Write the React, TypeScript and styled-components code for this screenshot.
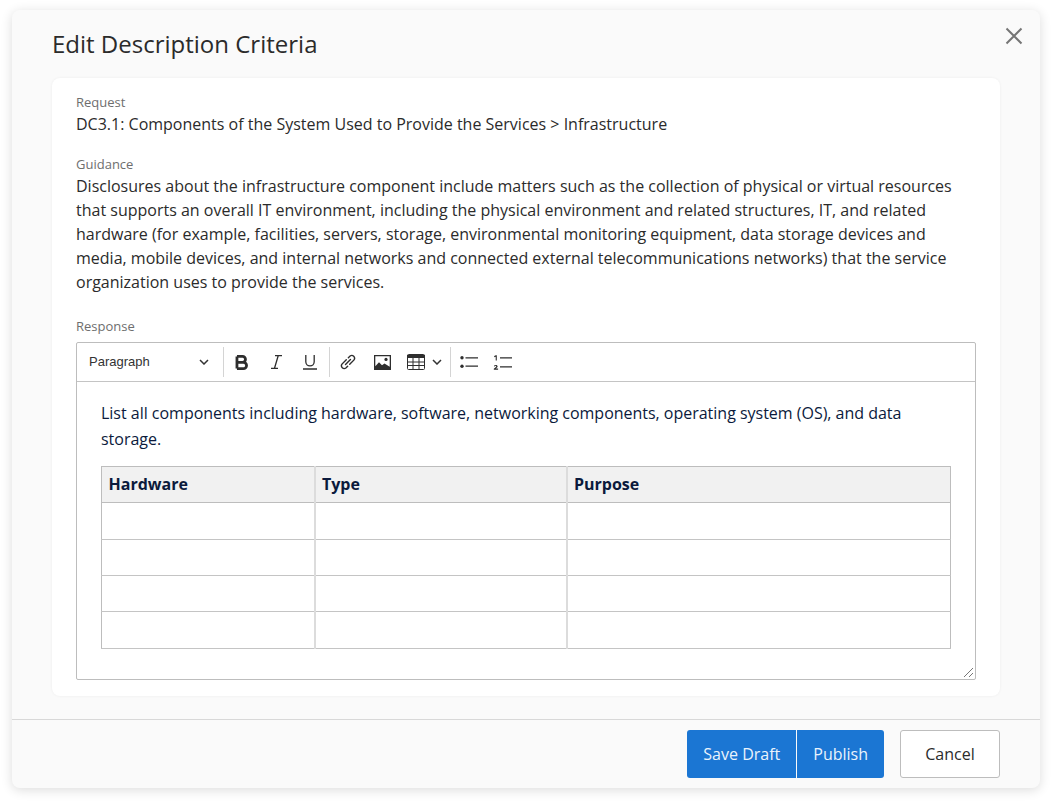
import React from "react";
import styled, { createGlobalStyle } from "styled-components";

const Global = createGlobalStyle`
  html, body { margin: 0; padding: 0; background: #fff; }
  * { box-sizing: border-box; }
  #root { font-family: "Open Sans", sans-serif; }
`;
const Page = styled.div`
  width: 1052px; height: 802px; padding: 10px 12px 14px; overflow: hidden;
`;
const Dialog = styled.div`
  position: relative; width: 1028px; height: 778px; background: #fafafa; border-radius: 8px;
  box-shadow: 0 2px 12px rgba(0,0,0,.14);
  display: flex; flex-direction: column;
`;
const Header = styled.div`
  height: 68px; padding: 17px 40px 0; flex: none;
`;
const Title = styled.h2`
  margin: 0; font-size: 24px; line-height: 33px; font-weight: 400; color: #2b2b2b;
`;
const Close = styled.button`
  position: absolute; top: 16px; right: 16px; width: 20px; height: 20px; padding: 0;
  border: 0; background: none; color: #757575; display: flex;
`;
const Card = styled.div`
  margin: 0 40px; padding: 14px 24px 16px; height: 618px; flex: none; background: #fff; border-radius: 8px;
  box-shadow: 0 0 3px rgba(0,0,0,.06);
`;
const Field = styled.div<{ $mb?: number }>`
  margin-bottom: ${p => p.$mb ?? 0}px;
`;
const Label = styled.div`
  font-size: 13px; line-height: 20px; color: #6e6e6e;
`;
const Value = styled.div`
  font-size: 16px; line-height: 24px; color: #2b2b2b;
`;
const Editor = styled.div`
  height: 338px; margin-top: 6px; border: 1px solid #bdbdbd; border-radius: 2px; background: #fff; position: relative;
  display: flex; flex-direction: column;
`;
const Toolbar = styled.div`
  height: 39px; flex: none; border-bottom: 1px solid #c4c4c4; display: flex; align-items: center; padding-left: 12px;
`;
const Select = styled.div`
  width: 134px; display: flex; align-items: center; justify-content: space-between; padding-right: 14px;
  font-family: "Liberation Sans", sans-serif; font-size: 13px; line-height: 14px; padding-bottom: 1px; color: #333;
`;
const Sep = styled.span<{ $ml?: number; $mr?: number }>`
  width: 1px; height: 30px; background: #d4d4d4; flex: none;
  margin: 0 ${p => p.$mr ?? 0}px 0 ${p => p.$ml ?? 0}px;
`;
const Tool = styled.span<{ $w?: number }>`
  width: ${p => p.$w ?? 34}px; height: 24px; display: flex; align-items: center; justify-content: center; flex: none; color: #2e2e2e;
`;
const ToolGap = styled.span`
  width: 7px; flex: none;
`;
const Content = styled.div`
  padding: 19px 24px 0; color: #0b1a3c; font-size: 16px; line-height: 25.6px; flex: 1;
`;
const Para = styled.p`
  margin: 0 0 14px; letter-spacing: -0.015px;
`;
const Table = styled.table`
  width: 850px; border-collapse: collapse; table-layout: fixed; border: 1px solid #bdbdbd;
`;
const Th = styled.th<{ $w?: number }>`
  ${p => (p.$w ? `width: ${p.$w}px;` : "")}
  height: 36.3px; padding: 0 6.5px 1px; background: #f1f1f1; text-align: left; font-size: 16px; font-weight: 700; color: #0b1a3c;
  border: 1px solid #bdbdbd; border-left: 2px solid #dcdcdc; border-right: 2px solid #dcdcdc;
  &:first-child { border-left: 1px solid #bdbdbd; }
  &:last-child { border-right: 1px solid #bdbdbd; }
`;
const Td = styled.td`
  height: 36.3px; border: 1px solid #c4c4c4; border-left: 2px solid #dcdcdc; border-right: 2px solid #dcdcdc;
  &:first-child { border-left: 1px solid #bdbdbd; }
  &:last-child { border-right: 1px solid #bdbdbd; }
`;
const Grip = styled.svg`
  position: absolute; right: 1px; bottom: 1px;
`;
const Footer = styled.div`
  flex: none; margin-top: 23px; border-top: 1px solid #d8d8d8; padding: 10px 40px 0; display: flex; justify-content: flex-end;
`;
const Primary = styled.button<{ $side: "l" | "r" }>`
  height: 48px; padding: 0 16px; background: #1b76d3; color: #eaf3fc; border: 0; font: 400 16px "Open Sans", sans-serif;
  border-radius: ${p => (p.$side === "l" ? "3px 0 0 3px" : "0 3px 3px 0")};
  ${p => (p.$side === "r" ? "margin-left: 1px;" : "")}
`;
const Secondary = styled.button`
  height: 48px; width: 100px; margin-left: 16px; background: #fff; color: #2b2b2b; border: 1px solid #bdbdbd; border-radius: 3px;
  font: 400 16px "Open Sans", sans-serif;
`;

const Chevron = () => (
  <svg width="10" height="6" viewBox="0 0 10 6" fill="none" stroke="#333" strokeWidth="1.5"><path d="M1 1l4 4 4-4" /></svg>
);

export default function App() {
  return (
    <Page>
      <Global />
      <Dialog>
        <Header><Title>Edit Description Criteria</Title></Header>
        <Close aria-label="Close">
          <svg width="20" height="20" viewBox="0 0 20 20" stroke="currentColor" strokeWidth="2" fill="none"><path d="M2.5 2.5l15 15M17.5 2.5l-15 15" /></svg>
        </Close>
        <Card>
          <Field $mb={18}>
            <Label>Request</Label>
            <Value>DC3.1: Components of the System Used to Provide the Services &gt; Infrastructure</Value>
          </Field>
          <Field $mb={22}>
            <Label>Guidance</Label>
            <Value>
              Disclosures about the infrastructure component include matters such as the collection of physical or virtual resources<br />
              that supports an overall IT environment, including the physical environment and related structures, IT, and related<br />
              hardware (for example, facilities, servers, storage, environmental monitoring equipment, data storage devices and<br />
              media, mobile devices, and internal networks and connected external telecommunications networks) that the service<br />
              organization uses to provide the services.
            </Value>
          </Field>
          <Label>Response</Label>
          <Editor>
            <Toolbar>
              <Select>Paragraph<Chevron /></Select>
              <Sep $mr={1} />
              <Tool>
                <svg width="14" height="15" viewBox="0 0 13 14" fill="none" stroke="#2e2e2e" strokeWidth="2.6"><path d="M1.800 1.300V12.700M1.800 1.300H7a2.700 2.700 0 0 1 0 5.500H1.800M1.800 6.800H7.800a2.950 2.950 0 0 1 0 5.900H1.800" /></svg>
              </Tool>
              <Tool>
                <svg width="11" height="14" viewBox="0 0 11 14" fill="none" stroke="#2e2e2e" strokeWidth="1.300"><path d="M4 .7h7M0 13.300h7M7.200 .7L3.500 13.300" /></svg>
              </Tool>
              <Tool>
                <svg width="14" height="15" viewBox="0 0 14 15" fill="none" stroke="#2e2e2e" strokeWidth="1.300"><path d="M2.800 0v6.700a4.200 4.200 0 0 0 8.400 0V0M0 14h14" /></svg>
              </Tool>
              <Sep $ml={2} $mr={1} />
              <Tool>
                <svg width="16" height="16" viewBox="1 1 13 13" fill="none" stroke="#2e2e2e" strokeWidth="1.150" strokeLinecap="round"><path d="M9.500 5.500L5.500 9.500M8.900 9.300L12.400 5.800A2.300 2.300 0 0 0 9.200 2.600L7.800 4M6.100 5.700L2.600 9.200A2.300 2.300 0 0 0 5.800 12.400L7.200 11" /></svg>
              </Tool>
              <Tool>
                <svg width="17" height="15" viewBox="0 0 17 15"><path fillRule="evenodd" fill="#2e2e2e" d="M0 0h17v15H0zM1.300 1.300v10l3.700-4 3 3 2.500-1.700 5.200 3.200V1.300z" /><circle cx="12" cy="4.400" r="1.600" fill="#2e2e2e" /></svg>
              </Tool>
              <Tool $w={51}>
                <svg width="18" height="16" viewBox="0 0 18 16" fill="none" stroke="#2e2e2e"><rect x=".5" y=".5" width="17" height="15" rx="1" /><path d="M0 2.500h18" strokeWidth="3" /><path d="M.5 8h17M.5 11.500h17M6 4v12M12 4v12" /></svg>
                <ToolGap />
                <Chevron />
              </Tool>
              <Sep />
              <Tool $w={35}>
                <svg width="18" height="12" viewBox="0 0 18 12" fill="#2e2e2e"><circle cx="2" cy="1.800" r="1.700" /><circle cx="2" cy="10.200" r="1.700" /><path d="M5.500 1.200H18v1.300H5.500zM5.500 9.500H18v1.300H5.500z" /></svg>
              </Tool>
              <Tool $w={32}>
                <svg width="19" height="15" viewBox="0 0 19 15" fill="#2e2e2e"><path d="M1.200 1.100L2.800.3h1v5.200H2.700V1.800L1.200 2.300zM.8 14.700v-1l2.100-1.800c.5-.5.4-1.100-.2-1.100-.4 0-.7.3-.8.700l-1-.2c.2-.9.9-1.400 1.900-1.400 1.800 0 2.400 1.600 1.200 2.700l-1 .9h2.100v1.200zM7 2.200h12v1.300H7zM7 11.200h12v1.300H7z" /></svg>
              </Tool>
            </Toolbar>
            <Content>
              <Para>List all components including hardware, software, networking components, operating system (OS), and data storage.</Para>
              <Table>
                <thead>
                  <tr><Th $w={213}>Hardware</Th><Th $w={252}>Type</Th><Th>Purpose</Th></tr>
                </thead>
                <tbody>
                  {[0, 1, 2, 3].map(r => (
                    <tr key={r}><Td /><Td /><Td /></tr>
                  ))}
                </tbody>
              </Table>
            </Content>
            <Grip width="11" height="11" viewBox="0 0 11 11" stroke="#777" fill="none"><path d="M1 10l9-9M6 10l4-4" /></Grip>
          </Editor>
        </Card>
        <Footer>
          <Primary $side="l">Save Draft</Primary>
          <Primary $side="r">Publish</Primary>
          <Secondary>Cancel</Secondary>
        </Footer>
      </Dialog>
    </Page>
  );
}
